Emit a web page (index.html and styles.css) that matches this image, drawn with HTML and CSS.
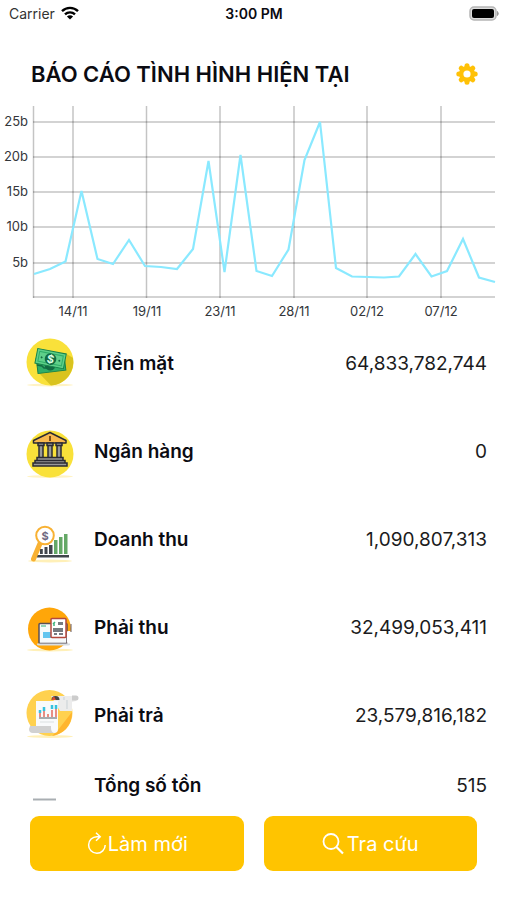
FILE: index.html
```html
<!DOCTYPE html>
<html lang="vi">
<head>
<meta charset="utf-8">
<meta name="viewport" content="width=device-width, initial-scale=1">
<title>Báo cáo tình hình hiện tại</title>
<link rel="stylesheet" href="styles.css">
</head>
<body>
<div class="status">
  <div class="status-carrier">
    <span>Carrier</span>
    <svg width="18" height="14" viewBox="0 0 18 14" aria-hidden="true">
      <g fill="none" stroke="#000" stroke-width="2.4">
        <path d="M1 5.200a11.400 11.400 0 0 1 16 0"/>
        <path d="M4 8.400a7.200 7.200 0 0 1 10 0"/>
      </g>
      <path d="M9 13.600 5.900 10.600a4.500 4.500 0 0 1 6.200 0z"/>
    </svg>
  </div>
  <div class="status-time">3:00 PM</div>
  <div class="status-battery">
    <svg width="30" height="15" viewBox="0 0 30 15" aria-hidden="true">
      <rect x="1" y="1" width="26" height="13" rx="4" fill="#ddd" stroke="#b5b5b5" stroke-width="1.500"/>
      <rect x="3" y="3" width="22" height="9" rx="2"/>
      <path d="M28.500 5.500q1.500 2 0 4z" fill="#999" stroke="#999"/>
    </svg>
  </div>
</div>
<header class="header">
  <h1>BÁO CÁO TÌNH HÌNH HIỆN TẠI</h1>
  <button class="settings" type="button" aria-label="Cài đặt">
    <svg width="22" height="22" viewBox="0 0 22 22" aria-hidden="true">
      <g stroke="#ffc107" stroke-width="5" stroke-linecap="round">
        <path d="M11 2.800v16.400M2.800 11h16.400M5.200 5.200l11.600 11.600M16.800 5.200 5.200 16.800"/>
      </g>
      <circle cx="11" cy="11" r="8" fill="#ffc107"/>
      <circle cx="11" cy="11" r="3.600" fill="#fff"/>
    </svg>
  </button>
</header>
<main class="content">
  <svg class="chart" viewBox="0 0 507 219" role="img" aria-label="Biểu đồ theo ngày">
    <g class="grid">
      <path d="M33 22H495M33 57H495M33 92H495M33 127H495M33 163H495M33 197H495"/>
      <path d="M33.500 6V198M73 6V198M146.500 6V198M220 6V198M294 6V198M367 6V198M441 6V198"/>
    </g>
    <polyline class="line" points="34,174 50,169 65.500,161.500 81.500,91 97.500,159 113,164 129,140 145,166 161,167 177,169 193,149 208.500,61 224.500,172 240.500,55 256.500,171 272,176 288.500,149.500 304.500,60 320,22 336,168 352,176.500 368,177 384,177.500 399,176.500 415.500,154 431.500,176.500 447,171 463,139 479,177.500 495,182"/>
    <g class="axis axis-y">
      <text x="28" y="26">25b</text>
      <text x="28" y="61">20b</text>
      <text x="28" y="96">15b</text>
      <text x="28" y="131">10b</text>
      <text x="28" y="167">5b</text>
    </g>
    <g class="axis axis-x">
      <text x="73" y="216">14/11</text>
      <text x="147" y="216">19/11</text>
      <text x="220" y="216">23/11</text>
      <text x="294" y="216">28/11</text>
      <text x="367" y="216">02/12</text>
      <text x="441" y="216">07/12</text>
    </g>
  </svg>
  <ul class="list">
    <li class="row">
      <svg class="icon" viewBox="0 0 60 60" aria-hidden="true">
        <ellipse cx="30" cy="52" rx="23" ry="1.500" fill="#fff3c4"/>
        <circle cx="30" cy="29" r="23.500" fill="#f9e13a"/>
        <path d="M17 38 31 52.500A23.500 23.500 0 0 0 53 25L45 20z" fill="#d9c31f"/>
        <g transform="rotate(-7 30 31)">
          <rect x="17" y="24" width="28" height="15" fill="#2fae68" stroke="#15834a"/>
          <circle cx="30" cy="32" r="5.500" fill="#126b43"/>
        </g>
        <g transform="rotate(11 30 26)">
          <rect x="16" y="18" width="29" height="15" fill="#5fd08a" stroke="#15834a"/>
          <rect x="18.500" y="20.500" width="24" height="10" fill="none" stroke="#2fae68"/>
          <circle cx="30.500" cy="26" r="5.800" fill="#126b43"/>
          <circle cx="21.500" cy="26" r="1" fill="#126b43"/><circle cx="39.500" cy="26" r="1" fill="#126b43"/>
          <text class="coin coin-light" x="30.500" y="30">$</text>
        </g>
        <path d="M17 32l5 1 2 2 4 0" fill="none" stroke="#126b43" stroke-width="1.500"/>
      </svg>
      <span class="name">Tiền mặt</span><span class="value">64,833,782,744</span>
    </li>
    <li class="row">
      <svg class="icon" viewBox="0 0 60 60" aria-hidden="true">
        <ellipse cx="30" cy="55.500" rx="23" ry="1.500" fill="#fff3c4"/>
        <circle cx="30" cy="33" r="23.500" fill="#f9e13a"/>
        <path d="M30 11.500 46 19.500V22H13.500V19.500z" fill="#f8b84e" stroke="#2b2b33" stroke-width="1.500" stroke-linejoin="round"/>
        <path d="M30 15v5" stroke="#7a4d18" stroke-width="2"/>
        <g fill="#999" stroke="#2b2b33" stroke-width="1.500">
          <path d="M19 24h4v13h-4zM28 24h4v13h-4zM37 24h4v13h-4z"/>
          <path d="M18 22h6v2.500h-6zM27 22h6v2.500h-6zM36 22h6v2.500h-6z"/>
          <path d="M17 36.500h26v3H17zM15 39.500h30v2.500H15zM13 42h34v3H13z"/>
        </g>
      </svg>
      <span class="name">Ngân hàng</span><span class="value">0</span>
    </li>
    <li class="row">
      <svg class="icon" viewBox="0 0 60 60" aria-hidden="true">
        <ellipse cx="30" cy="52" rx="22" ry="1.500" fill="#fff0b8"/>
        <g fill="#41464c">
          <path d="M20 40h2.800v5H20zM24.500 38h3v7h-3zM29 36h3.500v9H29z"/>
          <path d="M17 46h32v2.500H17z"/>
        </g>
        <path d="M34 31h3.500v14H34zM39 28h3.500v17H39zM44 25h3.500v20H44z" fill="#64a866"/>
        <path d="M20 34.500 13.500 50" stroke="#f8b133" stroke-width="5" stroke-linecap="round"/>
        <circle cx="25" cy="26.500" r="8.800" fill="#fff" stroke="#f8b133" stroke-width="2"/>
        <text class="coin coin-dark" x="25" y="30.500">$</text>
      </svg>
      <span class="name">Doanh thu</span><span class="value">1,090,807,313</span>
    </li>
    <li class="row">
      <svg class="icon" viewBox="0 0 60 60" aria-hidden="true">
        <ellipse cx="30" cy="53" rx="23" ry="1.500" fill="#fff0b8"/>
        <circle cx="29.500" cy="32" r="21.500" fill="#ffa609"/>
        <rect x="19" y="26.500" width="28" height="20" rx="1" fill="#f6fafb" stroke="#5b5056" stroke-width="1.500"/>
        <path d="M21 29h5" stroke="#72c9a4" stroke-width="1.500"/>
        <rect x="23" y="35" width="8" height="6" fill="#62c5ef"/>
        <path d="M17 46.500h33v1q0 1-2 1H19q-2 0-2-1z" fill="#d8dde2"/>
        <rect x="31" y="21.500" width="15" height="19" rx="1" fill="#fff" stroke="#b5483c" stroke-width="1.500"/>
        <path d="M34 26v3m-1-2 2-2" stroke="#3eb27d" stroke-width="1.500"/>
        <path d="M38 25h5v3h-5zM33 31h10v4H33zM34 36h3v2h-3zM39 36h4v2h-4z" fill="#777b80"/>
        <rect x="47" y="34" width="4" height="12" rx="1" fill="#fff"/><path d="M51 27v8" stroke="#685b60"/>
      </svg>
      <span class="name">Phải thu</span><span class="value">32,499,053,411</span>
    </li>
    <li class="row">
      <svg class="icon" viewBox="0 0 60 60" aria-hidden="true">
        <ellipse cx="30" cy="51.500" rx="23" ry="1.500" fill="#fff0b8"/>
        <circle cx="29.500" cy="28" r="23" fill="#ffd14f"/>
        <path d="M38 45 52 27A23 23 0 0 1 32 51z" fill="#ffb52e"/>
        <path d="M31 11h24q4 2 1 5l-4 1v9H40z" fill="#ececec"/>
        <path d="M52 10.500h4a2.500 2.500 0 0 1 0 5h-4z" fill="#ccc"/>
        <path d="M31.500 15a4 4 0 0 1 8 0z" fill="#454545"/><path d="M32 15a4 4 0 0 1 2-3.500L36 15z" fill="#e34d32"/>
        <path d="M44 12v3M47 15v9" stroke="#c9d1d5"/>
        <path d="M16 16h22v28q0 4-4 4H16z" fill="#f9fafb"/>
        <path d="M10 41h21v2q0 4 3 5H13q-4 0-4-4z" fill="#d1d1d1"/>
        <path d="M19 33h18" stroke="#8a9196" stroke-width="1.500"/>
        <g stroke-width="1.500" fill="none">
          <path d="M20 27v5M24 25v7M28 29v3M32 25v7M36 24v8" stroke="#e36b5d"/>
          <path d="M24 22v4M32 20v4M36 20v4M20 25v3" stroke="#37c2de" stroke-width="2.500"/>
          <path d="M20 37h14" stroke="#e5e8ea"/>
        </g>
      </svg>
      <span class="name">Phải trả</span><span class="value">23,579,816,182</span>
    </li>
    <li class="row row-cut">
      <svg class="icon" viewBox="0 0 60 60" aria-hidden="true">
        <path d="M13 44.500h23" stroke="#a9aeb2" stroke-width="2"/>
      </svg>
      <span class="name">Tổng số tồn</span><span class="value">515</span>
    </li>
  </ul>
</main>
<footer class="actions">
  <button class="action" type="button">
    <svg width="21" height="24" viewBox="0 0 21 24" aria-hidden="true">
      <path d="M13.500 4.700H11A8.300 8.300 0 1 0 19.200 13M10 .8l4.200 3.900L10 8.800" fill="none" stroke="#fff" stroke-width="1.500"/>
    </svg>
    <span>Làm mới</span>
  </button>
  <button class="action action-search" type="button">
    <svg width="22" height="24" viewBox="0 0 22 24" aria-hidden="true">
      <circle cx="9" cy="9.500" r="7.500" fill="none" stroke="#fff" stroke-width="1.800"/>
      <path d="m14.500 15 6.500 6.500" stroke="#fff" stroke-width="2.200"/>
    </svg>
    <span>Tra cứu</span>
  </button>
</footer>
</body>
</html>
```
FILE: styles.css
```css
* {
  box-sizing: border-box;
}

body {
  margin: 0;
  min-height: 100vh;
  display: flex;
  flex-direction: column;
  background: #fff;
  color: #0b0b12;
  font-family: Inter, "Liberation Sans", sans-serif;
}

.status {
  display: grid;
  grid-template-columns: 1fr auto 1fr;
  align-items: center;
  height: 26px;
  padding: 0 8px 0 9px;
  font-size: 14px;
}

.status-carrier {
  display: flex;
  align-items: center;
  gap: 6px;
  color: #333;
}

.status-time {
  font-weight: 600;
}

.status-battery {
  display: flex;
  justify-content: flex-end;
}

.header {
  display: flex;
  align-items: center;
  justify-content: space-between;
  height: 74px;
  padding: 22px 29px 0 31px;
}

h1 {
  margin: 0;
  font-size: 22px;
  line-height: 28px;
  font-weight: 600;
}

button {
  border: 0;
  font-family: inherit;
  cursor: pointer;
}

.settings {
  display: flex;
  padding: 0;
  background: none;
}

.chart {
  display: block;
  width: 100%;
}

.grid {
  fill: none;
  stroke: #000;
  stroke-opacity: 0.23;
  stroke-width: 1.5;
}

.line {
  fill: none;
  stroke: #8ae9ff;
  stroke-width: 2.2;
}

.axis {
  font-size: 13px;
  fill: #33363a;
}

.axis-y {
  text-anchor: end;
}

.axis-x {
  text-anchor: middle;
}

.list {
  margin: 0;
  padding: 0;
  list-style: none;
}

.row {
  display: flex;
  align-items: center;
  gap: 14px;
  height: 88px;
  padding: 0 20px;
}

.row-cut {
  height: 52px;
  overflow: hidden;
}

.icon {
  flex: none;
  width: 60px;
  height: 60px;
}

.coin {
  font-weight: 700;
  font-size: 11px;
  text-anchor: middle;
}

.coin-light {
  fill: #d9ffe5;
}

.coin-dark {
  fill: #6f6780;
}

.name {
  flex: 1;
  font-size: 19px;
  font-weight: 600;
}

.value {
  font-size: 19px;
  color: #1b1b20;
}

.actions {
  display: grid;
  grid-template-columns: 1fr 1fr;
  gap: 20px;
  padding: 5px 30px 30px;
}

.action {
  display: flex;
  align-items: center;
  justify-content: center;
  gap: 1px;
  height: 55px;
  padding: 0;
  border-radius: 9px;
  background: #ffc400;
  color: #fff;
  font-size: 20px;
}

.action-search {
  gap: 3px;
}
```
